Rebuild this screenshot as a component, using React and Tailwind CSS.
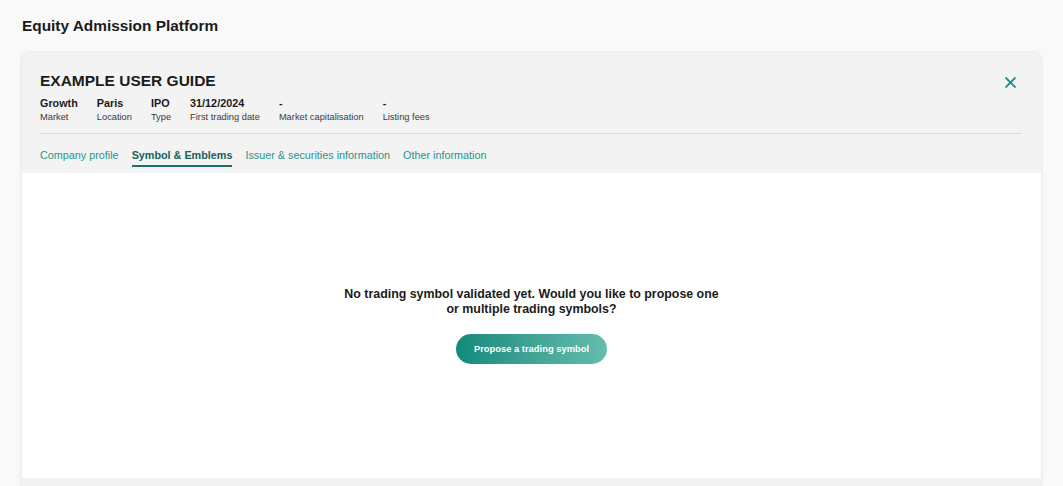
import React from "react";

const meta = [
  { value: "Growth", label: "Market" },
  { value: "Paris", label: "Location" },
  { value: "IPO", label: "Type" },
  { value: "31/12/2024", label: "First trading date" },
  { value: "-", label: "Market capitalisation" },
  { value: "-", label: "Listing fees" },
];

const tabs = ["Company profile", "Symbol & Emblems", "Issuer & securities information", "Other information"];

export default function App() {
  return (
    <div
      className="min-h-screen bg-[#f9f9f9] text-[#1b1b1b]"
      style={{ fontFamily: '"Liberation Sans", Arial, sans-serif' }}
    >
      <div className="px-[22px] pt-[16px]">
        <h1 className="text-[15.4px] leading-[20px] font-bold">Equity Admission Platform</h1>

        <div className="mt-[17px] rounded-t-[8px] bg-[#f3f3f3] shadow-[0_0_4px_rgba(0,0,0,0.12)]">
          <div className="px-[18px] pt-[19px]">
            <div className="flex items-start justify-between">
              <h2 className="text-[15.5px] leading-[18px] font-bold uppercase">Example user guide</h2>
              <button className="mt-[5px] mr-[7px] text-[#138f80]">
                <svg width="11" height="11" viewBox="0 0 11 11" fill="none" stroke="currentColor" strokeWidth="1.8">
                  <path d="M0.5 0.5 L10.5 10.5 M10.5 0.5 L0.5 10.5" />
                </svg>
              </button>
            </div>
            <div className="mt-[6px] flex gap-[19px]">
              {meta.map((m) => (
                <div key={m.label} className="flex flex-col">
                  <span className="text-[10.8px] leading-[14px] font-bold">{m.value}</span>
                  <span className="text-[9.3px] leading-[14px] text-[#3a3a3a]">{m.label}</span>
                </div>
              ))}
            </div>
            <div className="mt-[9px] h-px bg-[#dcdcdc] mr-[1px]" />
            <div className="mt-[14px] flex gap-[13px]">
              {tabs.map((t) => {
                const active = t === "Symbol & Emblems";
                return (
                  <div key={t} className="flex flex-col">
                    <span
                      className={
                        active
                          ? "text-[10.8px] leading-[14px] font-bold text-[#17625b]"
                          : "text-[10.8px] leading-[14px] text-[#2a9488]"
                      }
                    >
                      {t}
                    </span>
                    <span className={active ? "mt-[3px] h-[2px] bg-[#1a6f66]" : "mt-[3px] h-[2px]"} />
                  </div>
                );
              })}
            </div>
            <div className="h-[6px]" />
          </div>

          <div className="bg-white h-[305px] flex flex-col items-center pt-[114px]">
            <p className="text-[12.4px] leading-[15px] font-bold text-center w-[382px]">
              No trading symbol validated yet. Would you like to propose one or multiple trading symbols?
            </p>
            <button className="mt-[17px] h-[30px] w-[151px] rounded-full bg-gradient-to-r from-[#0e8a7c] to-[#64bcae] text-white text-[9.4px] font-bold">
              Propose a trading symbol
            </button>
          </div>
          <div className="h-[10px] bg-[#f3f3f3]" />
        </div>
      </div>
    </div>
  );
}
